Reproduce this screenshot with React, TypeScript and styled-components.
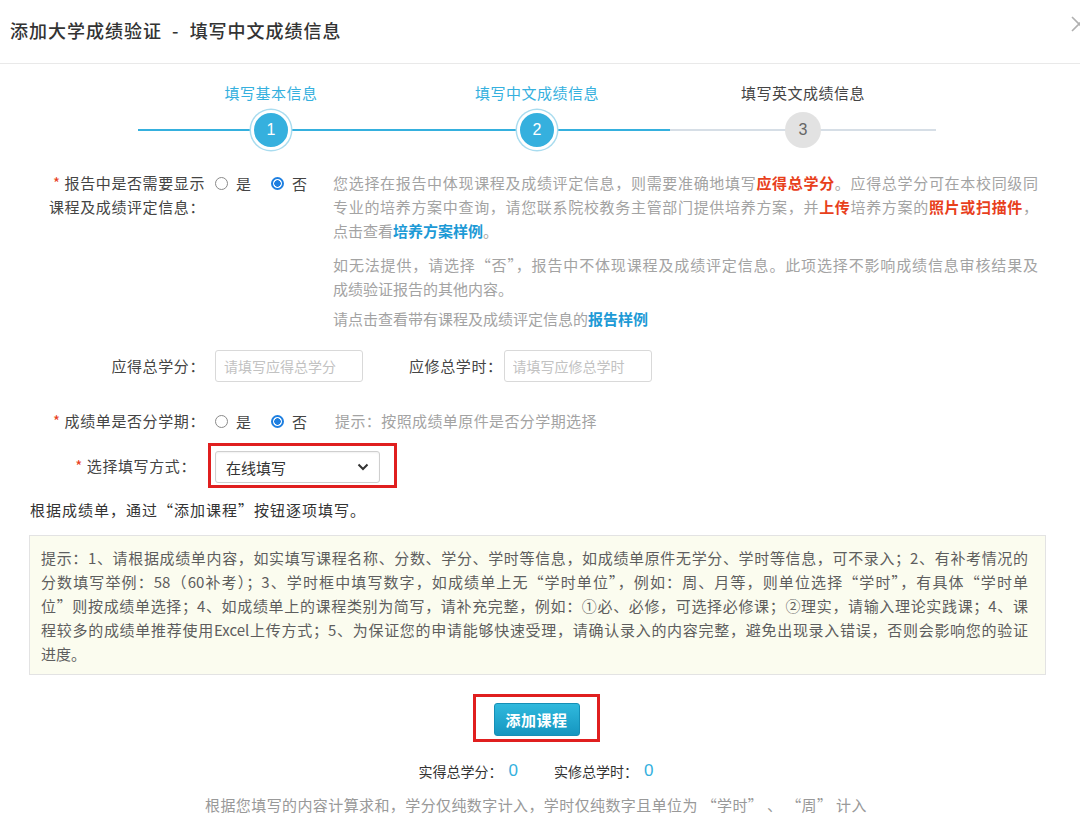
import React from "react";
import styled, { createGlobalStyle } from "styled-components";

const colors = {
  text: "#333333",
  label: "#444444",
  muted: "#a3a3a3",
  hint: "#999999",
  blue: "#35b0de",
  link: "#1d9ad6",
  red: "#e8401c",
  line: "#e9e9e9",
};

const GlobalStyle = createGlobalStyle`
  html, body {
    margin: 0;
    padding: 0;
    background: #ffffff;
    overflow: hidden;
  }
  body {
    font-family: "Noto Sans CJK SC", "Noto Sans", sans-serif;
    color: ${colors.text};
  }
`;

const Page = styled.div`
  width: 1080px;
  height: 836px;
  overflow: hidden;
  background: #fff;
`;

const Header = styled.header`
  height: 64px;
  box-sizing: border-box;
  padding: 0 0 4px 10px;
  display: flex;
  align-items: center;
  justify-content: space-between;
  border-bottom: 1px solid ${colors.line};
`;

const Title = styled.h1`
  margin: 0;
  font-size: 18px;
  font-weight: 500;
  color: #333;
  letter-spacing: 1px;
  white-space: pre;
`;

const Close = styled.svg`
  width: 18px;
  height: 18px;
  margin-right: -8px;
  margin-top: -12px;
`;

const Stepper = styled.div`
  display: grid;
  grid-template-columns: repeat(3, 266px);
  padding: 19px 0 0 138px;
`;

const Step = styled.div`
  display: flex;
  flex-direction: column;
  align-items: center;
`;

const StepLabel = styled.div<{ $active: boolean }>`
  font-size: 15px;
  line-height: 20px;
  letter-spacing: 0.5px;
  color: ${(p) => (p.$active ? colors.blue : "#444")};
`;

const StepTrack = styled.div<{ $active: boolean }>`
  position: relative;
  width: 100%;
  height: 40px;
  margin-top: 7px;
  display: flex;
  justify-content: center;
  align-items: center;

  &:before {
    content: "";
    position: absolute;
    left: 0;
    right: 0;
    top: 19px;
    height: 2px;
    background: ${(p) => (p.$active ? colors.blue : "#d6dee6")};
  }
`;

const StepDot = styled.div<{ $active: boolean }>`
  position: relative;
  box-sizing: border-box;
  width: ${(p) => (p.$active ? 40 : 36)}px;
  height: ${(p) => (p.$active ? 40 : 36)}px;
  border-radius: 50%;
  display: flex;
  align-items: center;
  justify-content: center;
  font-family: "Liberation Sans", Arial, sans-serif;
  font-size: 16px;
  color: ${(p) => (p.$active ? "#fff" : "#666")};
  background: ${(p) => (p.$active ? colors.blue : "#e2e2e2")};
  border: ${(p) => (p.$active ? "3px solid #fff" : "none")};
  box-shadow: ${(p) => (p.$active ? "0 0 0 1.5px #a9dcef" : "none")};
`;

const Form = styled.div`
  padding: 21px 0 0 40px;
`;

const FieldRow = styled.div<{ $top?: number }>`
  display: flex;
  align-items: flex-start;
  margin-top: ${(p) => p.$top ?? 0}px;
`;

const Label = styled.div<{ $trim?: number }>`
  width: 165px;
  box-sizing: border-box;
  padding-right: ${(p) => p.$trim ?? 0}px;
  flex-shrink: 0;
  text-align: right;
  font-size: 15px;
  line-height: 24px;
  letter-spacing: 0.6px;
  color: ${colors.label};
  margin-right: 10px;
`;

const InlineLabel = styled(Label)`
  width: auto;
  margin-left: 46px;
  margin-right: 1px;
`;

const Star = styled.span`
  color: ${colors.red};
  margin-right: 4px;
`;

const RadioGroup = styled.div`
  display: flex;
  align-items: center;
  height: 24px;
  gap: 20px;
  flex-shrink: 0;
`;

const RadioItem = styled.label`
  display: flex;
  align-items: center;
  gap: 8px;
  font-size: 15px;
  color: ${colors.label};
`;

const RadioMark = styled.span<{ $checked: boolean }>`
  box-sizing: border-box;
  width: 13px;
  height: 13px;
  border-radius: 50%;
  border: ${(p) => (p.$checked ? "2px solid #1e7fe0" : "1px solid #8a8a8a")};
  background: ${(p) => (p.$checked ? "radial-gradient(circle, #1e7fe0 0 3px, #fff 3.5px)" : "#fff")};
`;

const Description = styled.div`
  width: 705px;
  margin-left: 26px;
  font-size: 15px;
  line-height: 24px;
  color: ${colors.muted};
`;

const Para = styled.div<{ $space?: number }>`
  margin-top: ${(p) => p.$space ?? 0}px;
`;

const JLine = styled.span<{ $last?: boolean }>`
  display: block;
  text-align: ${(p) => (p.$last ? "left" : "justify")};
  text-align-last: ${(p) => (p.$last ? "left" : "justify")};
`;

const Red = styled.span`
  color: ${colors.red};
  font-weight: 600;
`;

const Link = styled.span`
  color: ${colors.link};
  font-weight: 600;
`;

const Input = styled.input`
  box-sizing: border-box;
  width: 148px;
  height: 32px;
  margin-top: -4px;
  border: 1px solid #d9d9d9;
  border-radius: 3px;
  padding: 0 8px;
  font-family: inherit;
  font-size: 14px;
  color: #333;
  outline: none;

  &::placeholder {
    color: #c2c2c2;
  }
`;

const Hint = styled.div`
  margin-left: 28px;
  font-size: 15px;
  line-height: 24px;
  letter-spacing: 0.4px;
  color: ${colors.muted};
`;

const Highlight = styled.div<{ $pad: string }>`
  box-sizing: border-box;
  border: 3px solid #e01f1f;
  padding: ${(p) => p.$pad};
`;

const SelectBox = styled.div`
  box-sizing: border-box;
  width: 165px;
  height: 32px;
  border: 1px solid #cfcfcf;
  border-radius: 3px;
  padding: 0 10px;
  display: flex;
  align-items: center;
  justify-content: space-between;
  font-size: 15px;
  color: #333;
  box-shadow: inset 0 1px 2px rgba(0, 0, 0, 0.06);
`;

const Note = styled.p`
  margin: 10px 0 0 30px;
  font-size: 15px;
  line-height: 24px;
  letter-spacing: 1px;
  color: #333;
`;

const NoticeBox = styled.div`
  width: 1017px;
  box-sizing: border-box;
  margin: 13px 0 0 29px;
  padding: 10px 17px 8px 11px;
  background: #fbfcef;
  border: 1px solid #e3e3e3;
  font-size: 15px;
  line-height: 24px;
  color: #5e5e5e;
`;

const Actions = styled.div`
  display: flex;
  flex-direction: column;
  align-items: center;
  padding: 19px 8px 0 0;
`;

const AddButton = styled.button`
  width: 86px;
  height: 33px;
  border: 1px solid #158fb6;
  border-radius: 3px;
  background: linear-gradient(#30b9dd, #1596c0);
  color: #fff;
  font-family: inherit;
  font-size: 15px;
  font-weight: 600;
  letter-spacing: 0.5px;
  cursor: pointer;
`;

const Totals = styled.div`
  display: flex;
  align-items: center;
  gap: 36px;
  margin-top: 17px;
  font-size: 14px;
  line-height: 24px;
  color: #333;
`;

const TotalItem = styled.span`
  display: flex;
  align-items: center;
  gap: 6px;
`;

const Count = styled.span`
  font-family: "Liberation Sans", Arial, sans-serif;
  font-size: 17px;
  color: ${colors.blue};
`;

const Footnote = styled.p`
  margin: 10px 0 0;
  font-size: 15px;
  line-height: 24px;
  letter-spacing: 0.4px;
  color: ${colors.hint};
`;

const steps = [
  { label: "填写基本信息", active: true },
  { label: "填写中文成绩信息", active: true },
  { label: "填写英文成绩信息", active: false },
];

const Radio = ({ label, checked }: { label: string; checked?: boolean }) => (
  <RadioItem>
    <RadioMark $checked={!!checked} />
    {label}
  </RadioItem>
);

const App = () => {
  return (
    <Page>
      <GlobalStyle />
      <Header>
        <Title>{"添加大学成绩验证  -  填写中文成绩信息"}</Title>
        <Close viewBox="0 0 18 18">
          <path d="M2 2 L16 16 M16 2 L2 16" stroke="#b0b0b0" strokeWidth="1.6" fill="none" />
        </Close>
      </Header>

      <Stepper>
        {steps.map((s, i) => (
          <Step key={s.label}>
            <StepLabel $active={s.active}>{s.label}</StepLabel>
            <StepTrack $active={s.active}>
              <StepDot $active={s.active}>{i + 1}</StepDot>
            </StepTrack>
          </Step>
        ))}
      </Stepper>

      <Form>
        <FieldRow>
          <Label>
            <Star>*</Star>报告中是否需要显示
            <br />
            课程及成绩评定信息：
          </Label>
          <RadioGroup>
            <Radio label="是" />
            <Radio label="否" checked />
          </RadioGroup>
          <Description>
            <Para>
              <JLine>
                您选择在报告中体现课程及成绩评定信息，则需要准确地填写<Red>应得总学分</Red>。应得总学分可在本校同级同
              </JLine>
              <JLine>
                专业的培养方案中查询，请您联系院校教务主管部门提供培养方案，并<Red>上传</Red>培养方案的
                <Red>照片或扫描件</Red>，
              </JLine>
              <JLine $last>
                点击查看<Link>培养方案样例</Link>。
              </JLine>
            </Para>
            <Para $space={10}>
              <JLine>如无法提供，请选择“否”，报告中不体现课程及成绩评定信息。此项选择不影响成绩信息审核结果及</JLine>
              <JLine $last>成绩验证报告的其他内容。</JLine>
            </Para>
            <Para $space={6}>
              <JLine $last>
                请点击查看带有课程及成绩评定信息的<Link>报告样例</Link>
              </JLine>
            </Para>
          </Description>
        </FieldRow>

        <FieldRow $top={23}>
          <Label>应得总学分：</Label>
          <Input placeholder="请填写应得总学分" />
          <InlineLabel>应修总学时：</InlineLabel>
          <Input placeholder="请填写应修总学时" />
        </FieldRow>

        <FieldRow $top={27}>
          <Label>
            <Star>*</Star>成绩单是否分学期：
          </Label>
          <RadioGroup>
            <Radio label="是" />
            <Radio label="否" checked />
          </RadioGroup>
          <Hint>提示：按照成绩单原件是否分学期选择</Hint>
        </FieldRow>

        <FieldRow $top={10}>
          <Label $trim={9} style={{ alignSelf: "center" }}>
            <Star>*</Star>选择填写方式：
          </Label>
          <Highlight $pad="5px 14px 2px 4px" style={{ marginLeft: -7 }}>
            <SelectBox>
              在线填写
              <svg width="12" height="8" viewBox="0 0 12 8">
                <path d="M1.5 1.5 L6 6 L10.5 1.5" stroke="#333" strokeWidth="2" fill="none" />
              </svg>
            </SelectBox>
          </Highlight>
        </FieldRow>
      </Form>

      <Note>根据成绩单，通过“添加课程”按钮逐项填写。</Note>

      <NoticeBox>
        <JLine>
          提示：1、请根据成绩单内容，如实填写课程名称、分数、学分、学时等信息，如成绩单原件无学分、学时等信息，可不录入；2、有补考情况的
        </JLine>
        <JLine>
          分数填写举例：58（60补考）；3、学时框中填写数字，如成绩单上无“学时单位”，例如：周、月等，则单位选择“学时”，有具体“学时单
        </JLine>
        <JLine>
          位”则按成绩单选择；4、如成绩单上的课程类别为简写，请补充完整，例如：①必、必修，可选择必修课；②理实，请输入理论实践课；4、课
        </JLine>
        <JLine>
          程较多的成绩单推荐使用Excel上传方式；5、为保证您的申请能够快速受理，请确认录入的内容完整，避免出现录入错误，否则会影响您的验证
        </JLine>
        <JLine $last>进度。</JLine>
      </NoticeBox>

      <Actions>
        <Highlight $pad="6px 17px 3px 18px">
          <AddButton>添加课程</AddButton>
        </Highlight>
        <Totals>
          <TotalItem>
            实得总学分：<Count>0</Count>
          </TotalItem>
          <TotalItem>
            实修总学时：<Count>0</Count>
          </TotalItem>
        </Totals>
        <Footnote>根据您填写的内容计算求和，学分仅纯数字计入，学时仅纯数字且单位为 “学时” 、 “周” 计入</Footnote>
      </Actions>
    </Page>
  );
};

export default App;
